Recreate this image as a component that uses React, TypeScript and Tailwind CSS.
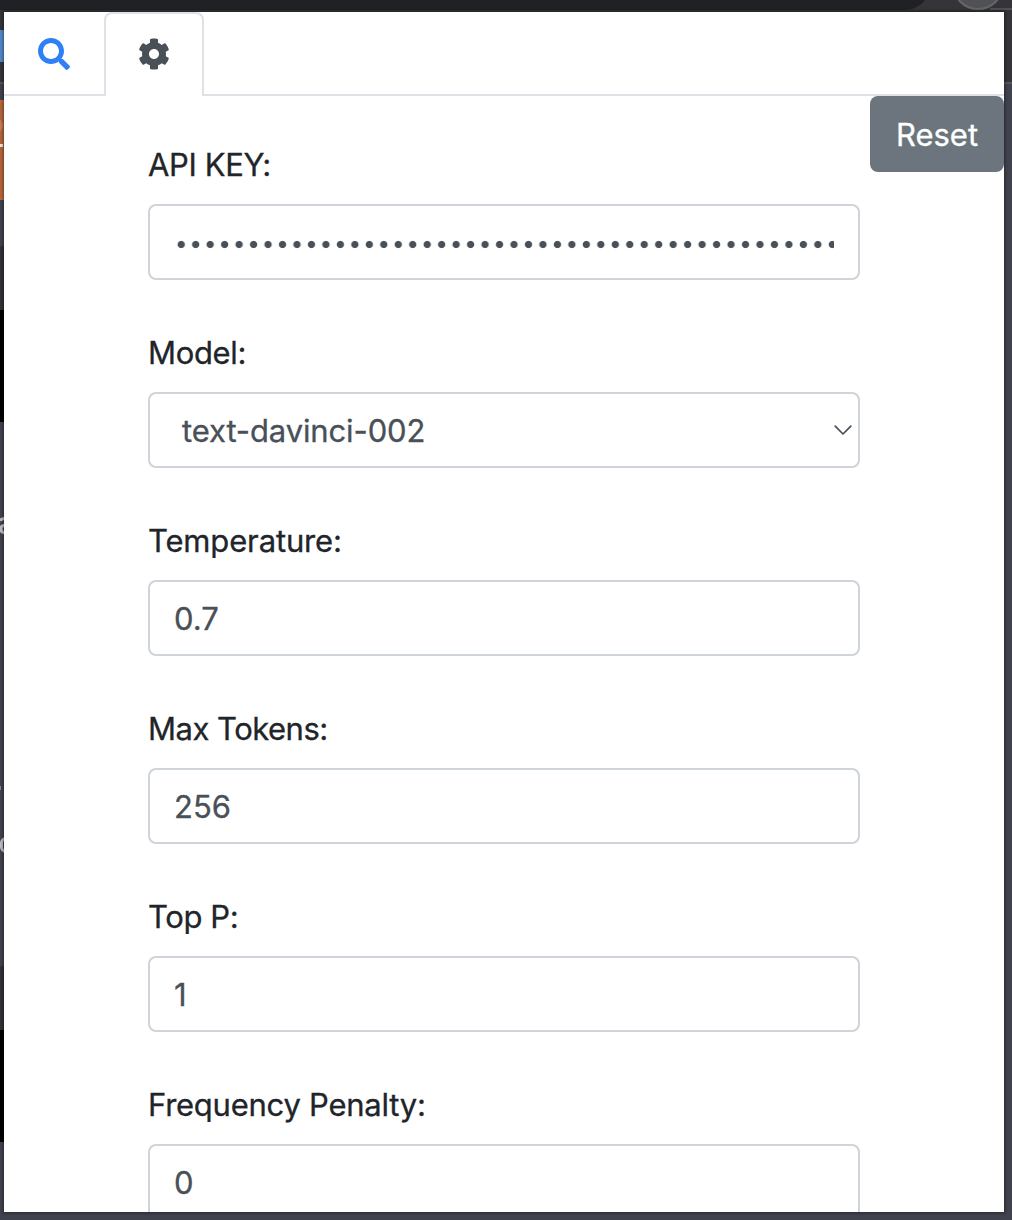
import { FaCog, FaSearch } from "react-icons/fa";

function Label({ text, tracking }: { text: string; tracking: string }) {
  return (
    <label className={`block h-12 whitespace-nowrap text-[31px] leading-[50px] text-[#212529] [-webkit-text-stroke:0.3px] ${tracking}`}>
      {text}
    </label>
  );
}

const BOX =
  "mt-4 flex h-[76px] w-[712px] items-center rounded-lg border-2 border-[#ced4da] bg-white text-[31px] text-[#495057]";

function TextField({ label, value, tracking }: { label: string; value: string; tracking: string }) {
  return (
    <div>
      <Label text={label} tracking={tracking} />
      <div className={`${BOX} px-6 pt-0.5`}>
        <span className="[-webkit-text-stroke:0.3px]">{value}</span>
      </div>
    </div>
  );
}

function SecretField() {
  return (
    <div>
      <Label text="API KEY:" tracking="tracking-[-0.35px]" />
      <div className={`${BOX} px-6`}>
        <div className="mt-[5px] h-[9px] w-full bg-[radial-gradient(circle_at_center,#495057_3.1px,transparent_4.1px)] bg-[length:14.47px_9px] bg-repeat-x" />
      </div>
    </div>
  );
}

function ModelField() {
  return (
    <div>
      <Label text="Model:" tracking="tracking-[-0.35px]" />
      <div className={`${BOX} justify-between pr-1.5 pl-8`}>
        <span className="pt-0.5 tracking-[-0.12px] [-webkit-text-stroke:0.3px]">text-davinci-002</span>
        <svg width="18" height="12" viewBox="0 0 18 12" fill="none" stroke="#495057" strokeWidth="1.7" strokeLinecap="round" strokeLinejoin="round">
          <path d="M1.2 2.2 9 10l7.8-7.8" />
        </svg>
      </div>
    </div>
  );
}

/* The dimmed page that shows round the edges of the popup. */
function Backdrop() {
  return (
    <div className="absolute inset-0 overflow-hidden bg-[#40424d]">
      <div className="relative h-[82px] bg-[#353539]">
        <div className="absolute -top-10 left-[-40px] h-[50px] w-[970px] rounded-[25px] bg-[#202125]" />
        <div className="absolute -top-[42px] left-[952px] size-[52px] rounded-full border-2 border-[#65666a] bg-[#505155]" />
        <div className="absolute top-[8px] left-[990px] h-[2px] w-[22px] bg-[#505155]" />
        <div className="absolute top-[30px] left-0 h-8 w-1 bg-[#5287c8]" />
      </div>
      <div className="h-0.5 bg-[#56565b]" />
      <div className="flex w-1 flex-col">
        <div className="mt-4 h-[100px] overflow-hidden border-y-2 border-[#c86530] bg-[#b4653b]">
          <div className="mt-4 -ml-3 h-[15px] w-[15px] rounded-full bg-[#c47e57]" />
          <div className="mt-[11px] h-[3px] w-[3px] bg-[#f2e8e2]" />
        </div>
        <div className="mt-[46px] h-16 bg-[#323137]" />
        <div className="h-[112px] bg-black" />
        <div className="mt-[544px] h-16 bg-[#323137]" />
        <div className="h-[112px] bg-black" />
      </div>
      <svg className="absolute top-[516px] left-0" width="4" height="20" viewBox="0 0 4 20" fill="none" stroke="#c0c0c4" strokeWidth="3">
        <path d="M0 4.5Q2 2.5 4 2.5M4 9.5Q1 9.5 1 13T4 16.5" />
      </svg>
      <div className="absolute top-[786px] left-0 h-1 w-px bg-[#85868e]" />
      <div className="absolute top-[837px] left-0 h-4 w-3 rounded-full border-[3px] border-[#c0c0c4]" />
    </div>
  );
}

export default function App() {
  return (
    <div className="relative h-[1220px] w-[1012px] overflow-hidden pt-3 pl-1 font-['Inter',sans-serif]">
      <Backdrop />
      <main className="relative h-[1200px] w-[1000px] bg-white shadow-[0_0_3px_1px_rgba(0,0,0,0.4)]">
        <nav className="flex h-[84px]">
          <div className="flex w-[101px] items-center justify-center rounded-br-[2px] border-b-2 border-[#dee2e6] pt-0.5 pr-px">
            <FaSearch className="size-8 text-[#2f80f7]" />
          </div>
          <div className="-ml-px flex w-[100px] items-center justify-center rounded-t-lg border-x-2 border-t-2 border-[#dee2e6] bg-white pb-0.5">
            <FaCog className="size-8 text-[#495057]" />
          </div>
          <div className="-ml-0.5 flex-1 rounded-bl-[2px] border-b-2 border-[#dee2e6]" />
        </nav>
        <button className="absolute top-[84px] right-0 h-[76px] w-[134px] rounded-lg bg-[#6c757d] pt-0.5 text-[31px] text-white [-webkit-text-stroke:0.3px]">
          Reset
        </button>
        <form className="ml-36 flex h-[1116px] w-[712px] flex-col gap-12 overflow-hidden pt-11">
          <SecretField />
          <ModelField />
          <TextField label="Temperature:" value="0.7" tracking="tracking-[-0.15px]" />
          <TextField label="Max Tokens:" value="256" tracking="tracking-[-0.5px]" />
          <TextField label="Top P:" value="1" tracking="tracking-[-0.4px]" />
          <TextField label="Frequency Penalty:" value="0" tracking="tracking-[-0.25px]" />
        </form>
      </main>
    </div>
  );
}
